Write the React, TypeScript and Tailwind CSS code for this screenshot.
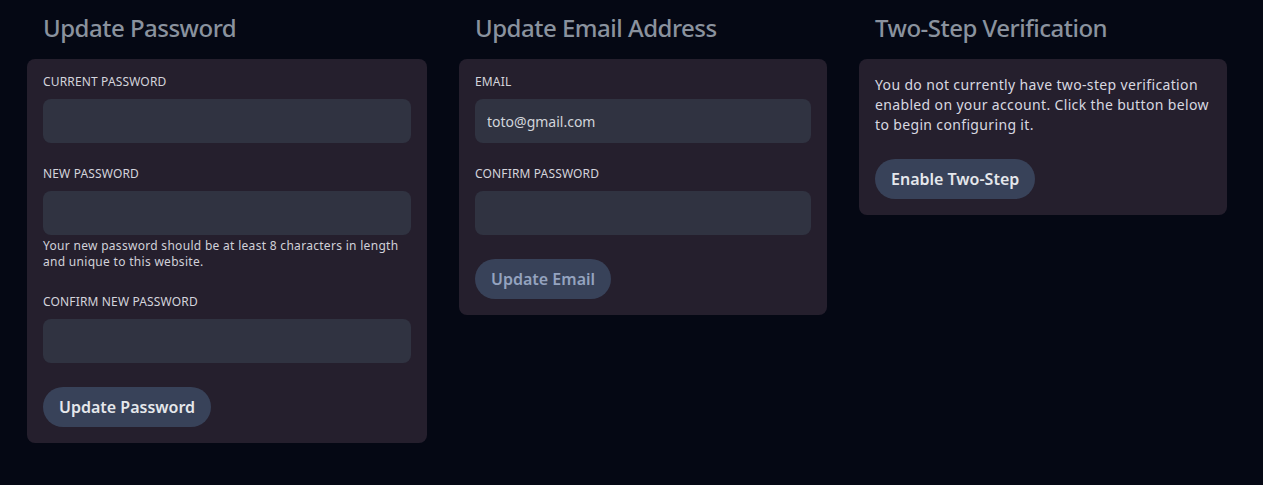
const Label = ({ children }: { children: string }) => (
  <label className="block text-xs leading-4 uppercase tracking-[0.15px] text-[#d4d4dc] mb-[9px]">{children}</label>
);

const Input = ({ value = "" }: { value?: string }) => (
  <input
    readOnly
    value={value}
    className="block w-full h-11 rounded-lg bg-[#303341] px-3 text-sm text-[#d1d5db] outline-none"
  />
);

const Button = ({ children, disabled = false }: { children: string; disabled?: boolean }) => (
  <button
    className={
      disabled
        ? "h-10 px-4 rounded-full bg-[#384259] text-base font-semibold text-[#94a3bf]"
        : "h-10 px-4 rounded-full bg-[#384259] text-base font-semibold text-[#e5e7eb]"
    }
  >
    {children}
  </button>
);

const Heading = ({ children }: { children: string }) => (
  <h2 className="pl-4 text-2xl leading-8 font-medium tracking-[-0.5px] text-[#8a929e] mb-[15px]">{children}</h2>
);

export default function App() {
  return (
    <div
      className="min-h-[485px] bg-[#050814] pl-[27px] pt-3"
      style={{ fontFamily: '"Noto Sans", "Open Sans", sans-serif' }}
    >
      <div className="grid grid-cols-[400px_368px_368px] gap-8 items-start">
        <div>
          <Heading>Update Password</Heading>
          <div className="bg-[#251f2d] rounded-lg px-4 pt-[15px] pb-4">
            <Label>Current Password</Label>
            <Input />
            <div className="mt-[23px]">
              <Label>New Password</Label>
              <Input />
              <p className="mt-[3px] text-xs leading-4 tracking-wide text-[#d1d1d9]">
                Your new password should be at least 8 characters in length and unique to this website.
              </p>
            </div>
            <div className="mt-6">
              <Label>Confirm New Password</Label>
              <Input />
            </div>
            <div className="mt-6">
              <Button>Update Password</Button>
            </div>
          </div>
        </div>

        <div>
          <Heading>Update Email Address</Heading>
          <div className="bg-[#251f2d] rounded-lg px-4 pt-[15px] pb-4">
            <Label>Email</Label>
            <Input value="toto@gmail.com" />
            <div className="mt-[23px]">
              <Label>Confirm Password</Label>
              <Input />
            </div>
            <div className="mt-6">
              <Button disabled>Update Email</Button>
            </div>
          </div>
        </div>

        <div>
          <Heading>Two-Step Verification</Heading>
          <div className="bg-[#251f2d] rounded-lg p-4">
            <p className="text-sm leading-5 tracking-wide text-[#d8d8e0]">
              You do not currently have two-step verification enabled on your account. Click the button below to begin configuring it.
            </p>
            <div className="mt-6">
              <Button>Enable Two-Step</Button>
            </div>
          </div>
        </div>
      </div>
    </div>
  );
}
